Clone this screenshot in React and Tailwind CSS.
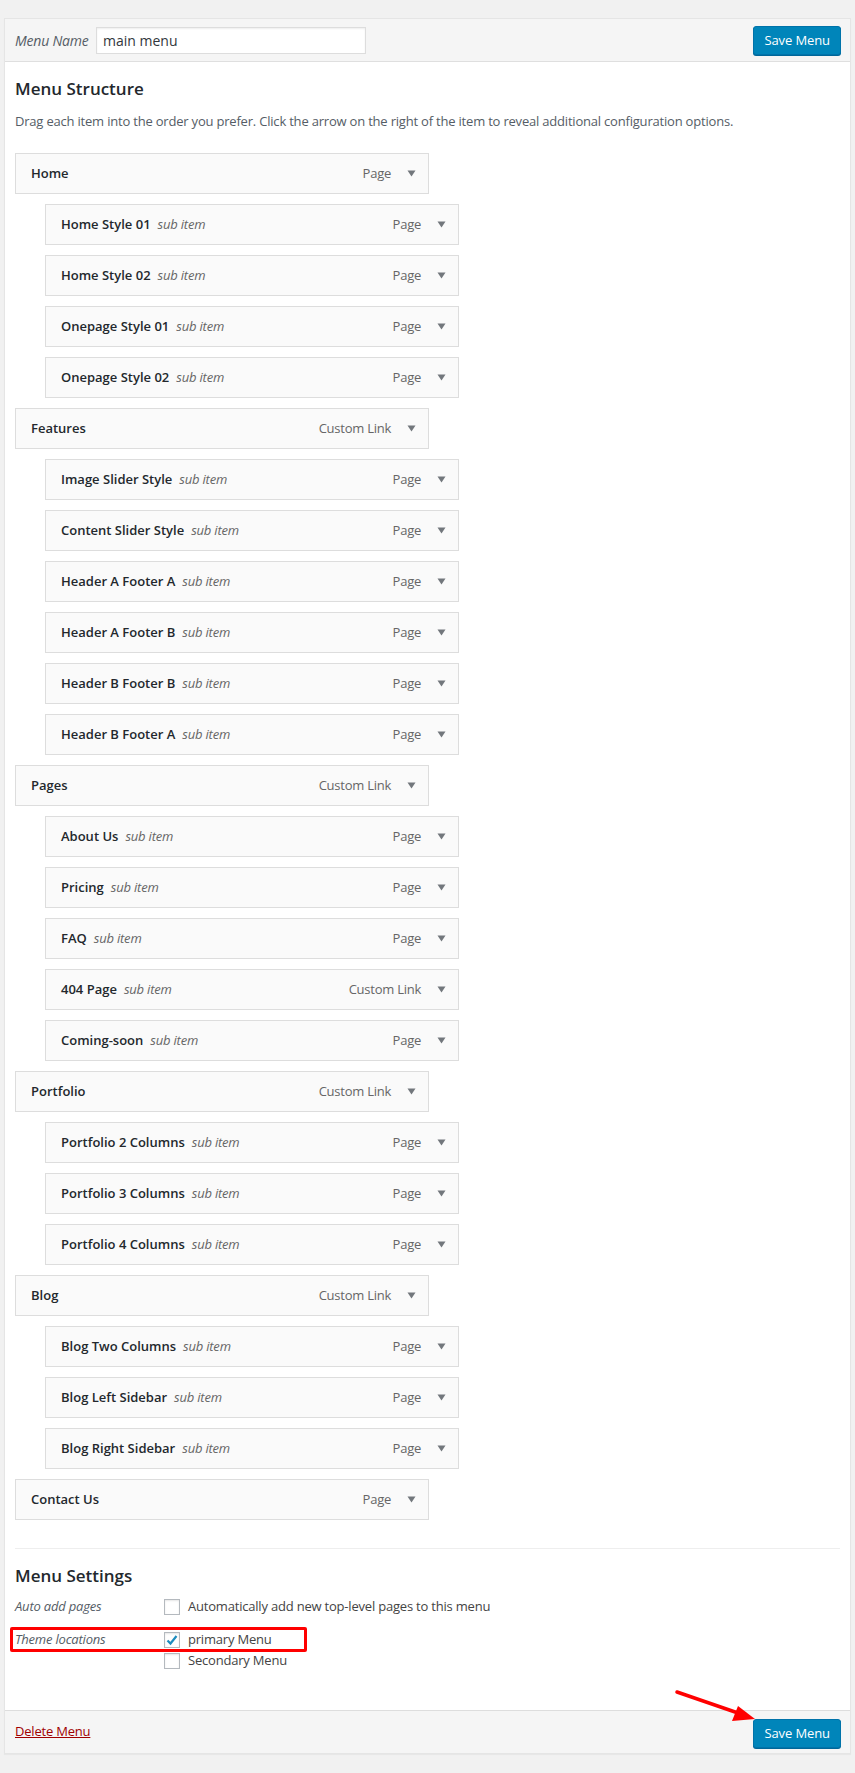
import React from "react";

const MENU = [
  { title: "Home", type: "Page", children: ["Home Style 01", "Home Style 02", "Onepage Style 01", "Onepage Style 02"] },
  {
    title: "Features",
    type: "Custom Link",
    children: ["Image Slider Style", "Content Slider Style", "Header A Footer A", "Header A Footer B", "Header B Footer B", "Header B Footer A"],
  },
  {
    title: "Pages",
    type: "Custom Link",
    children: ["About Us", "Pricing", "FAQ", { title: "404 Page", type: "Custom Link" }, "Coming-soon"],
  },
  { title: "Portfolio", type: "Custom Link", children: ["Portfolio 2 Columns", "Portfolio 3 Columns", "Portfolio 4 Columns"] },
  { title: "Blog", type: "Custom Link", children: ["Blog Two Columns", "Blog Left Sidebar", "Blog Right Sidebar"] },
  { title: "Contact Us", type: "Page", children: [] },
];

function flatten() {
  const rows = [];
  MENU.forEach((m) => {
    rows.push({ title: m.title, type: m.type, depth: 0 });
    m.children.forEach((c) => {
      if (typeof c === "string") rows.push({ title: c, type: "Page", depth: 1 });
      else rows.push({ ...c, depth: 1 });
    });
  });
  return rows;
}

function Caret() {
  return (
    <svg width="9" height="7" viewBox="0 0 9 7" className="shrink-0">
      <path d="M0.5 0.5 L8.5 0.5 L4.5 6.5 Z" fill="#72777c" />
    </svg>
  );
}

function MenuItem({ item, last }) {
  return (
    <div
      className={`${item.depth ? "ml-[30px]" : ""} ${last ? "" : "mb-[10px]"} w-[414px] h-[41px] flex items-center border border-[#dddddd] bg-[#fafafa] pl-[15px] pr-[12px]`}
    >
      <span className="text-[13px] font-semibold text-[#23282d]">{item.title}</span>
      {item.depth ? <span className="ml-[7px] text-[13px] italic text-[#666666] tracking-[-0.2px]">sub item</span> : null}
      <span className="ml-auto text-[13px] text-[#666666] mr-[16px] tracking-[-0.25px]">{item.type}</span>
      <Caret />
    </div>
  );
}

function SaveButton() {
  return (
    <button className="h-[29px] px-[10px] rounded-[3px] bg-[#0085ba] border border-[#0073aa] shadow-[0_1px_0_#006799] text-white text-[13px] leading-[26px] tracking-[-0.1px]">
      Save Menu
    </button>
  );
}

function Checkbox({ checked }) {
  return (
    <span className="w-[16px] h-[16px] border border-[#b4b9be] bg-white shadow-[inset_0_1px_2px_rgba(0,0,0,0.1)] flex items-center justify-center shrink-0">
      {checked && (
        <svg width="14" height="14" viewBox="0 0 14 14">
          <path d="M2.5 7.5 L5.5 10.5 L11.5 3" fill="none" stroke="#1e8cbe" strokeWidth="2.2" />
        </svg>
      )}
    </span>
  );
}

export default function App() {
  const rows = flatten();
  return (
    <div
      className="relative bg-[#f1f1f1] min-h-[1773px] pt-[18px] pl-[4px] text-[#444444]"
      style={{ fontFamily: '"Open Sans", "Liberation Sans", sans-serif' }}
    >
      <div className="w-[847px] border border-[#e5e5e5] bg-white shadow-[0_1px_1px_rgba(0,0,0,0.04)]">
        {/* header */}
        <div className="h-[43px] bg-[#f5f5f5] border-b border-[#dfdfdf] flex items-center pl-[10px] pr-[9px]">
          <span className="italic text-[14px] text-[#555d66] w-[81px] tracking-[-0.2px]">Menu Name</span>
          <div className="w-[270px] h-[27px] border border-[#dddddd] bg-white shadow-[inset_0_1px_2px_rgba(0,0,0,0.07)] px-[6px] text-[14px] leading-[25px] text-[#32373c]">
            main menu
          </div>
          <div className="ml-auto">
            <SaveButton />
          </div>
        </div>

        {/* body */}
        <div className="px-[10px] pb-[39px]">
          <div className="mt-[16px] text-[17px] leading-[22px] font-semibold text-[#23282d]">Menu Structure</div>
          <div className="mt-[11px] text-[13px] leading-[20px] text-[#555d66] tracking-[-0.2px]">
            Drag each item into the order you prefer. Click the arrow on the right of the item to reveal additional configuration options.
          </div>
          <div className="mt-[22px]">
            {rows.map((r, i) => (
              <MenuItem key={i} item={r} last={i === rows.length - 1} />
            ))}
          </div>

          <div className="mt-[28px] border-t border-[#eeeeee]" />
          <div className="mt-[16px] text-[17px] leading-[22px] font-semibold text-[#23282d]">Menu Settings</div>

          <div className="mt-[10px] flex items-center h-[20px] text-[13px] tracking-[-0.2px]">
            <span className="w-[149px] italic text-[#555d66]">Auto add pages</span>
            <Checkbox />
            <span className="ml-[8px]">Automatically add new top-level pages to this menu</span>
          </div>

          <div className="relative mt-[13px] flex items-center h-[20px] text-[13px] tracking-[-0.2px]">
            <span className="absolute left-[-5px] top-[-3px] w-[297px] h-[25px] border-[3px] border-[#ff0000] rounded-[2px]" />
            <span className="w-[149px] italic text-[#555d66]">Theme locations</span>
            <Checkbox checked />
            <span className="ml-[8px]">primary Menu</span>
          </div>
          <div className="mt-[1px] flex items-center h-[20px] text-[13px] tracking-[-0.2px]">
            <span className="w-[149px]" />
            <Checkbox />
            <span className="ml-[8px]">Secondary Menu</span>
          </div>
        </div>

        {/* footer */}
        <div className="h-[43px] bg-[#f5f5f5] border-t border-[#dddddd] flex items-center pl-[10px] pr-[9px]">
          <a className="text-[13px] text-[#a00000] underline tracking-[-0.2px]">Delete Menu</a>
          <div className="ml-auto pt-[2px]">
            <SaveButton />
          </div>
        </div>
      </div>

      {/* annotation arrow */}
      <svg className="absolute left-0 top-0 pointer-events-none" width="855" height="1773">
        <line x1="677" y1="1692" x2="738" y2="1713" stroke="#ff0000" strokeWidth="3.5" strokeLinecap="round" />
        <polygon points="755,1719 738,1706 732,1721" fill="#ff0000" />
      </svg>
    </div>
  );
}
